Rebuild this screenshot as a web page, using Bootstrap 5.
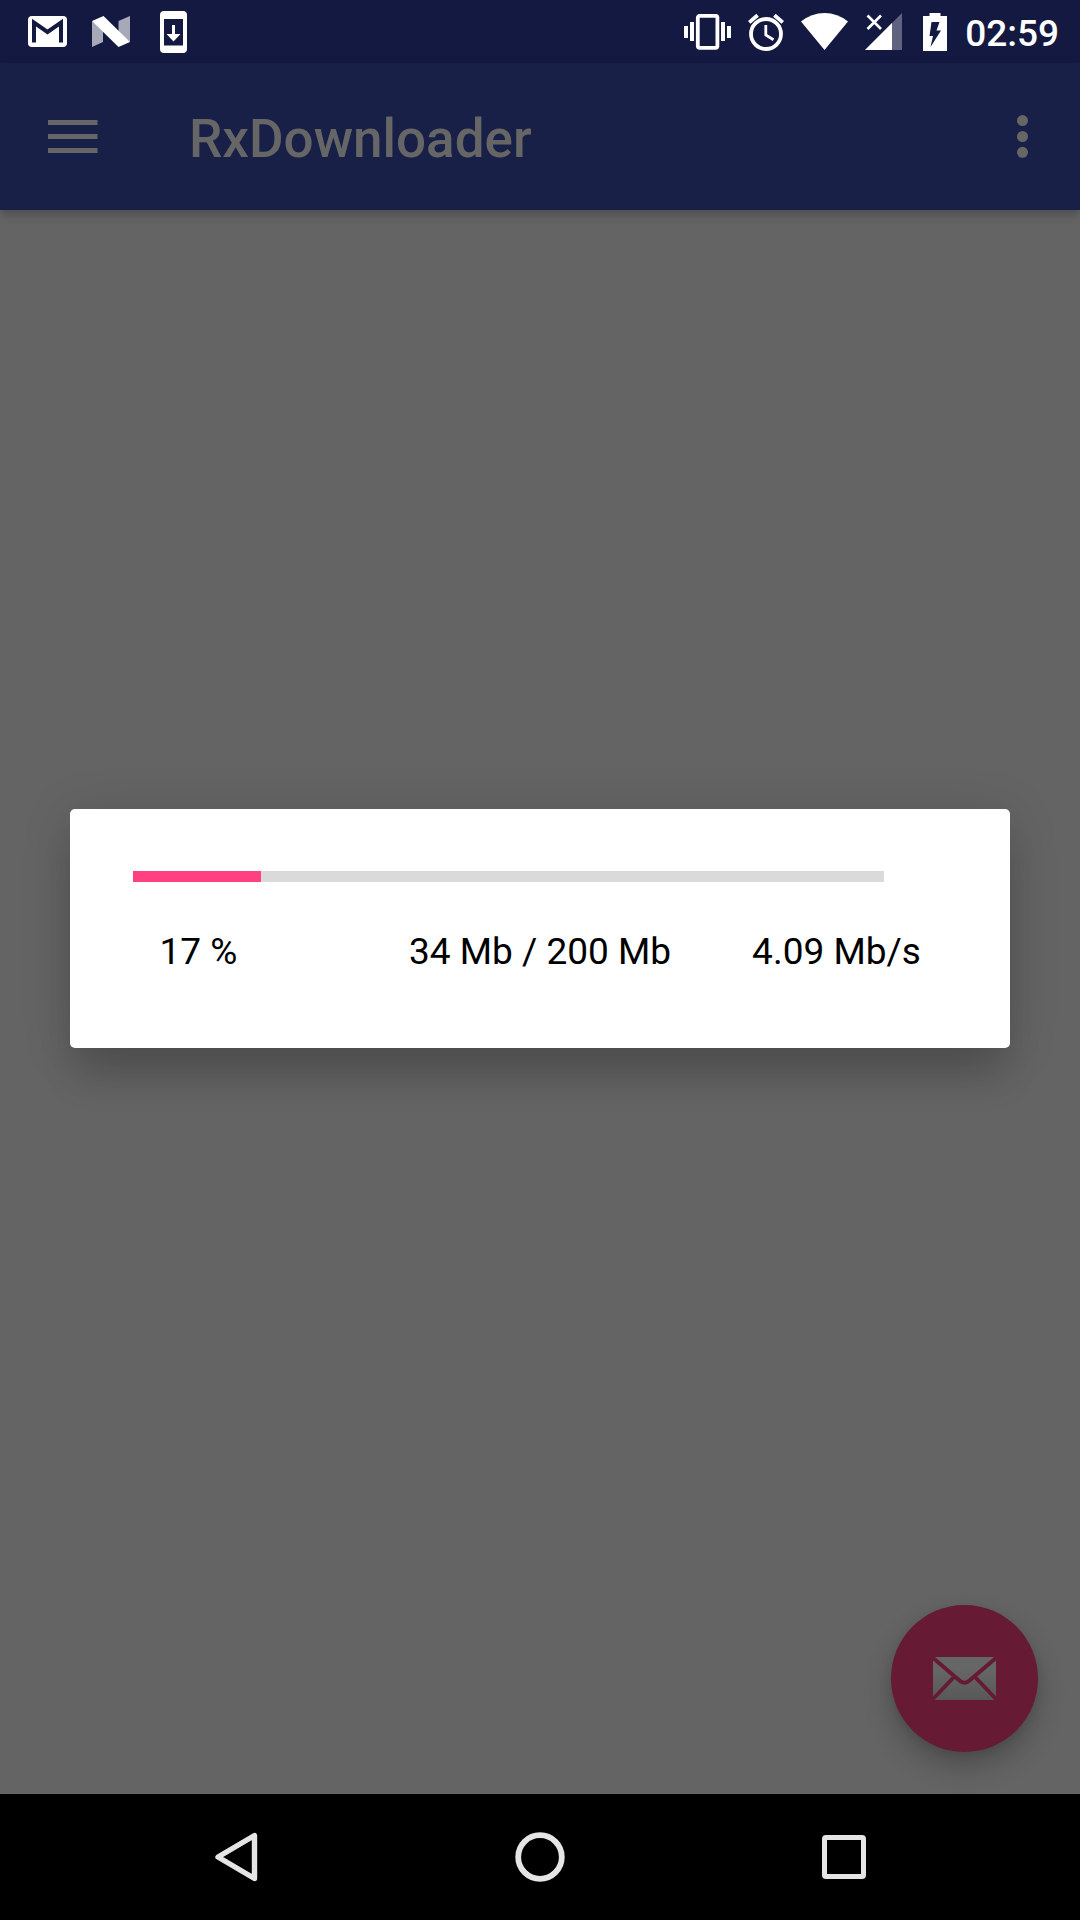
<!DOCTYPE html>
<html lang="en">
<head>
<meta charset="utf-8">
<meta name="viewport" content="width=device-width, initial-scale=1">
<title>RxDownloader</title>
<link rel="stylesheet" href="https://cdn.jsdelivr.net/npm/bootstrap@5.3.0/dist/css/bootstrap.min.css">
<style>
  body { font-family: Roboto, "Noto Sans", sans-serif; background: #646464; }
  svg { display: block; flex: none; }
  .screen { width: 1080px; height: 1920px; }
  .status-bar { height: 63px; background: #131940; padding: 0 21px 0 28px; color: #fff; }
  .notif-icons { gap: 25px; }
  .notif-icons .update-icon { margin-left: 5px; }
  .system-icons { gap: 17px; }
  .clock { font-size: 37px; font-weight: 500; line-height: 63px; padding-top: 3px; margin-left: -3px; }
  .app-bar { height: 147px; padding: 0 52px 0 48px; background: #192048; color: #666; box-shadow: 0 4px 10px rgba(0,0,0,.24); z-index: 1; }
  .app-title { font-size: 53px; font-weight: 500; line-height: 1; margin-left: 91px; padding-top: 6px; }
  .fab { right: 42px; bottom: 42px; width: 147px; height: 147px; background: #661a34; box-shadow: 0 14px 28px rgba(0,0,0,.24), 0 2px 8px rgba(0,0,0,.08); }
  .progress-dialog { left: 70px; top: 809px; width: 940px; height: 239px; border-radius: 5px; padding: 62px 63px 0; color: #000; box-shadow: 0 36px 36px -6px rgba(0,0,0,.14), 0 6px 50px rgba(0,0,0,.15); }
  .progress-dialog .progress { width: 751px; height: 11px; border-radius: 0; background: #dadada; }
  .progress-dialog .progress-bar { background: #ff4081; transition: none; }
  .stats { font-size: 37px; line-height: 43px; margin-top: 48px; white-space: nowrap; }
  .stat-percent { width: 131px; }
  .stat-size { width: 470px; padding-left: 82px; }
  .stat-speed { width: 205px; }
  .nav-keys { height: 126px; background: #000; padding: 0 214px; }
</style>
</head>
<body>
<div class="screen position-relative d-flex flex-column overflow-hidden">
  <header class="status-bar d-flex justify-content-between align-items-center">
    <div class="notif-icons d-flex align-items-center">
      <svg width="39" height="31" viewBox="0 0 39 31"><rect width="39" height="31" rx="4" fill="#fff"/><path d="M6 26.500V6.500L19.500 16 33 6.500V26.500" fill="none" stroke="#131940" stroke-width="4"/></svg>
      <svg width="38" height="31" viewBox="0 0 38 31"><path d="M0 5 11 13V26L0 31ZM26.500 5 38 0V26L26.500 18Z" fill="#a7a8b8"/><path d="M0 5 11.500 0 38 26 26.500 31Z" fill="#fff"/></svg>
      <svg class="update-icon" width="27" height="42" viewBox="0 0 27 42"><path fill="#fff" fill-rule="evenodd" d="M4 0H23a4 4 0 0 1 4 4V38a4 4 0 0 1-4 4H4a4 4 0 0 1-4-4V4a4 4 0 0 1 4-4ZM4 8V34.500H23V8Z"/><path d="M12 14h3v9h5.500l-7 7.500L6.500 23H12Z" fill="#fff"/></svg>
    </div>
    <div class="system-icons d-flex align-items-center">
      <svg width="47" height="36" viewBox="0 0 47 36"><rect x="13.800" y="1.800" width="19.600" height="32" rx="2" fill="none" stroke="#fff" stroke-width="3.800"/><path d="M0 12h4v12H0zM6 8h4v19H6zM37 8h4v19h-4zM43 12h4v12h-4z" fill="#fff"/></svg>
      <svg width="36" height="38" viewBox="0 0 36 38"><circle cx="18" cy="21" r="15" fill="none" stroke="#fff" stroke-width="3.800"/><path d="M1.200 9.400 9.600 2.200M26.400 2.200l8.400 7.200" stroke="#fff" stroke-width="3.800"/><path d="M17.800 12v10l7.700 4.800" fill="none" stroke="#fff" stroke-width="2.800"/></svg>
      <svg width="47" height="37" viewBox="0 0 47 37"><path d="M0 8.500Q10.500 0 23.500 0T47 8.500L23.500 37Z" fill="#fff"/></svg>
      <svg width="37" height="37" viewBox="0 0 37 37"><path d="M37 0V37H0Z" fill="#5f6380"/><path d="M27 10V37H0Z" fill="#fff"/><path d="M2.500 2.500 16 16M16 2.500 2.500 16" stroke="#fff" stroke-width="2.600"/></svg>
      <svg class="mx-1" width="24" height="38" viewBox="0 0 24 38"><path d="M6.500 0h11v3H24V38H0V3H6.500Z" fill="#fff"/><path d="M8.500 9h8l-3 8.500h4.500L7.500 34l2.500-11H6.500Z" fill="#131940"/></svg>
      <span class="clock">02:59</span>
    </div>
  </header>

  <nav class="app-bar position-relative d-flex align-items-center">
    <svg width="50" height="34" viewBox="0 0 50 34"><path d="M0 0h49.500v5H0zM0 14h49.500v5H0zM0 28h49.500v5H0z" fill="currentColor"/></svg>
    <div class="app-title">RxDownloader</div>
    <svg class="ms-auto" width="11" height="43" viewBox="0 0 11 43"><g fill="currentColor"><circle cx="5.500" cy="5.600" r="5.500"/><circle cx="5.500" cy="21.500" r="5.500"/><circle cx="5.500" cy="37.300" r="5.500"/></g></svg>
  </nav>

  <main class="flex-grow-1 position-relative overflow-hidden">
    <button class="fab btn border-0 p-0 rounded-circle position-absolute d-flex align-items-center justify-content-center" aria-label="Email">
      <svg width="63" height="43" viewBox="0 0 63 43">
        <defs><linearGradient id="paper" x1="0" y1="0" x2="0" y2="1"><stop offset=".3" stop-color="#666"/><stop offset="1" stop-color="#585858"/></linearGradient></defs>
        <rect width="63" height="43" fill="url(#paper)"/>
        <path d="M-1 0 26.500 23.500Q31.500 28 36.500 23.500L64 0M-1 43 20.500 20.500M64 43 42.500 20.500" fill="none" stroke="#661a34" stroke-width="3.900"/>
      </svg>
    </button>
  </main>

  <footer class="nav-keys d-flex align-items-center justify-content-between">
    <svg width="44" height="50" viewBox="0 0 44 50"><path d="M40.500 3.500V46.500L4 25Z" fill="none" stroke="#e5e5e5" stroke-width="5.400" stroke-linejoin="round"/></svg>
    <svg width="50" height="50" viewBox="0 0 50 50"><circle cx="25" cy="25" r="21.800" fill="none" stroke="#e5e5e5" stroke-width="5.800"/></svg>
    <svg width="44" height="44" viewBox="0 0 44 44"><rect x="2.500" y="2.500" width="39" height="39" rx="1.500" fill="none" stroke="#e5e5e5" stroke-width="5"/></svg>
  </footer>

  <section class="progress-dialog position-absolute bg-white z-3" role="dialog">
    <div class="progress"><div class="progress-bar" style="width:17%"></div></div>
    <div class="stats d-flex text-center">
      <div class="stat-percent">17 %</div>
      <div class="stat-size">34 Mb / 200 Mb</div>
      <div class="stat-speed">4.09 Mb/s</div>
    </div>
  </section>
</div>
<script src="https://cdn.jsdelivr.net/npm/bootstrap@5.3.0/dist/js/bootstrap.bundle.min.js"></script>
</body>
</html>
